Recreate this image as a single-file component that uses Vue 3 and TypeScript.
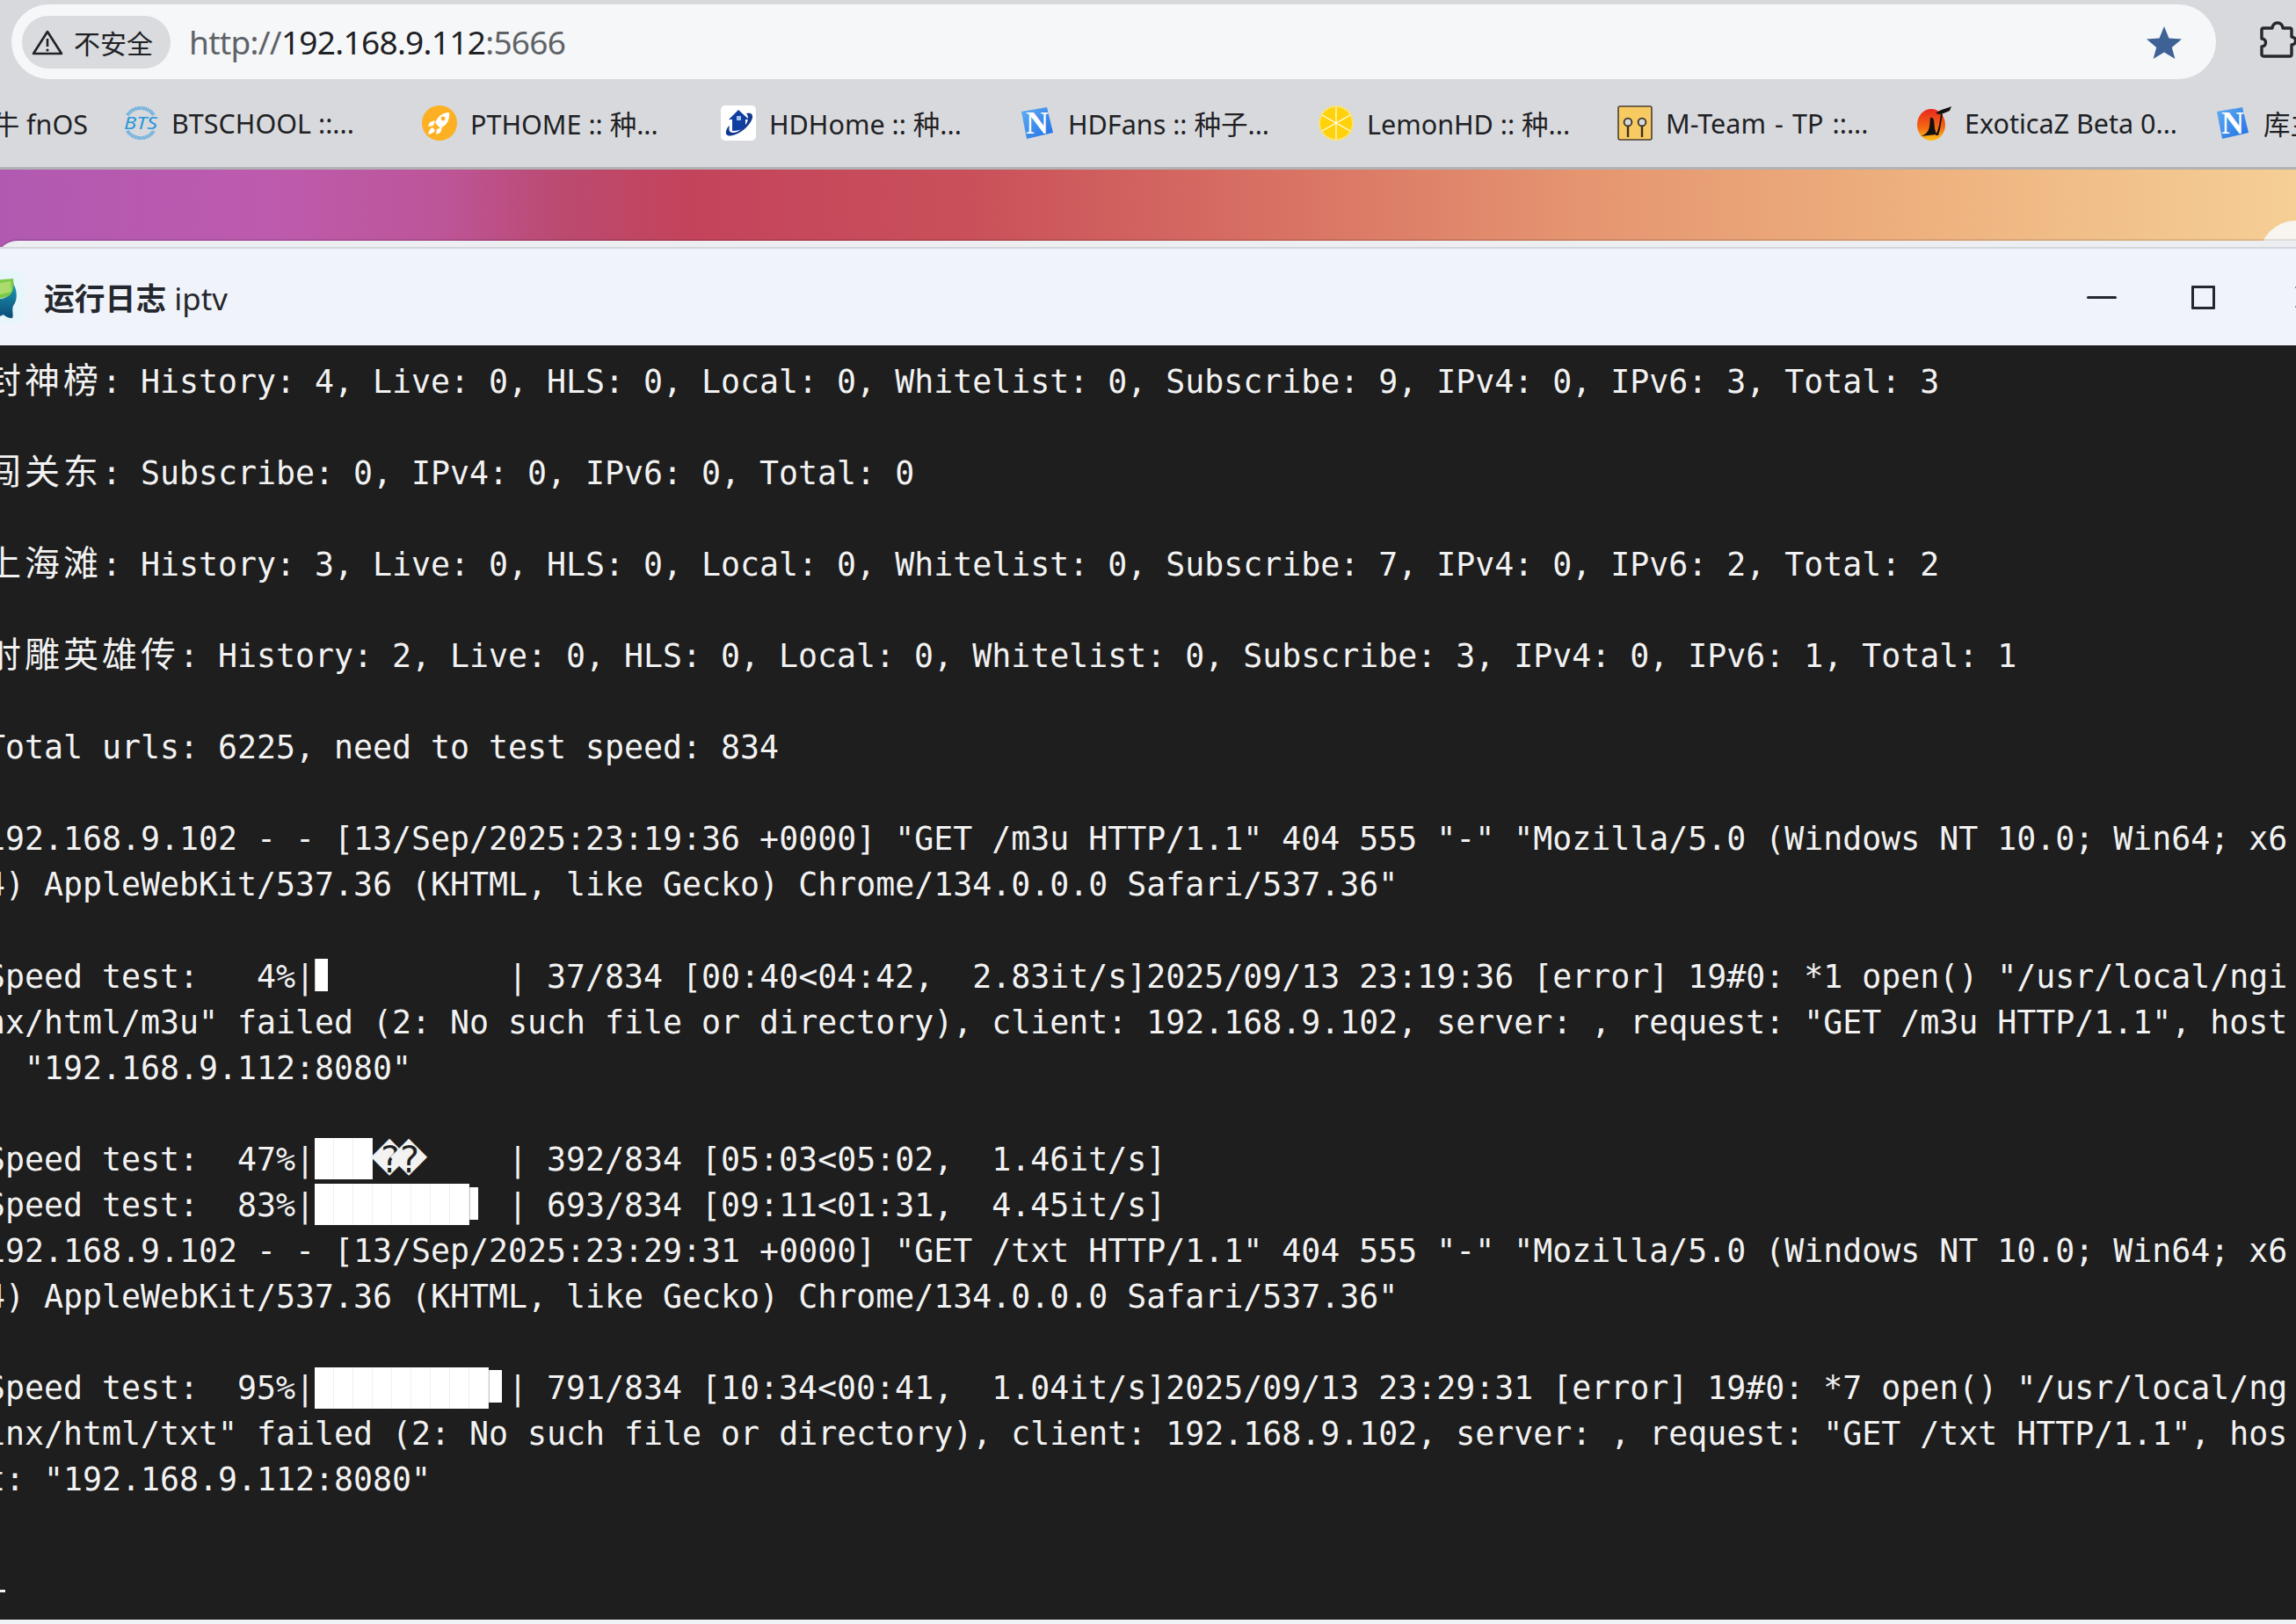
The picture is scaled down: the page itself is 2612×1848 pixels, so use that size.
<script setup lang="ts">
type Seg = { k: 't' | 'cjk' | 'full' | 'part' | 'bad'; v?: string; n?: number }
const T = (v: string): Seg => ({ k: 't', v })
const C = (v: string): Seg => ({ k: 'cjk', v })
const F = (n: number): Seg => ({ k: 'full', n })
const P = (n: number): Seg => ({ k: 'part', n })
const B: Seg = { k: 'bad', v: '\uFFFD' }

const rows: Seg[][] = [
  [C('封神榜'), T(': History: 4, Live: 0, HLS: 0, Local: 0, Whitelist: 0, Subscribe: 9, IPv4: 0, IPv6: 3, Total: 3')],
  [],
  [C('闯关东'), T(': Subscribe: 0, IPv4: 0, IPv6: 0, Total: 0')],
  [],
  [C('上海滩'), T(': History: 3, Live: 0, HLS: 0, Local: 0, Whitelist: 0, Subscribe: 7, IPv4: 0, IPv6: 2, Total: 2')],
  [],
  [C('射雕英雄传'), T(': History: 2, Live: 0, HLS: 0, Local: 0, Whitelist: 0, Subscribe: 3, IPv4: 0, IPv6: 1, Total: 1')],
  [],
  [T('Total urls: 6225, need to test speed: 834')],
  [],
  [T('192.168.9.102 - - [13/Sep/2025:23:19:36 +0000] "GET /m3u HTTP/1.1" 404 555 "-" "Mozilla/5.0 (Windows NT 10.0; Win64; x6')],
  [T('4) AppleWebKit/537.36 (KHTML, like Gecko) Chrome/134.0.0.0 Safari/537.36"')],
  [],
  [T('Speed test:   4%|'), P(15), T('         | 37/834 [00:40<04:42,  2.83it/s]2025/09/13 23:19:36 [error] 19#0: *1 open() "/usr/local/ngi')],
  [T('nx/html/m3u" failed (2: No such file or directory), client: 192.168.9.102, server: , request: "GET /m3u HTTP/1.1", host')],
  [T(': "192.168.9.112:8080"')],
  [],
  [T('Speed test:  47%|'), F(3), B, B, T('     | 392/834 [05:03<05:02,  1.46it/s]')],
  [T('Speed test:  83%|'), F(8), P(10), T(' | 693/834 [09:11<01:31,  4.45it/s]')],
  [T('192.168.9.102 - - [13/Sep/2025:23:29:31 +0000] "GET /txt HTTP/1.1" 404 555 "-" "Mozilla/5.0 (Windows NT 10.0; Win64; x6')],
  [T('4) AppleWebKit/537.36 (KHTML, like Gecko) Chrome/134.0.0.0 Safari/537.36"')],
  [],
  [T('Speed test:  95%|'), F(9), P(15), T('| 791/834 [10:34<00:41,  1.04it/s]2025/09/13 23:29:31 [error] 19#0: *7 open() "/usr/local/ng')],
  [T('inx/html/txt" failed (2: No such file or directory), client: 192.168.9.102, server: , request: "GET /txt HTTP/1.1", hos')],
  [T('t: "192.168.9.112:8080"')],
  [],
]
</script>

<template>
  <div class="page">
    <header class="chrome">
      <div class="omnibox">
        <div class="chip">
          <svg class="warn" viewBox="0 0 36 30" width="36" height="30">
            <path d="M18 3 L34 28 H2 Z" fill="none" stroke="#202124" stroke-width="2.6" stroke-linejoin="round" />
            <path d="M18 11 V20" stroke="#202124" stroke-width="2.6" />
            <circle cx="18" cy="24" r="1.6" fill="#202124" />
          </svg>
          <span class="chip-text">不安全</span>
        </div>
        <div class="url"><span class="dim">http://</span>192.168.9.112<span class="dim">:5666</span></div>
        <svg class="star" viewBox="0 0 40 37" width="40" height="37">
          <path d="M20 0 L25.5 13.6 L40 14.6 L28.8 24 L32.4 37 L20 29.6 L7.6 37 L11.2 24 L0 14.6 L14.5 13.6 Z" fill="#3f6296" />
        </svg>
        <svg class="puzzle" viewBox="0 0 44 42" width="44" height="42">
          <path d="M3 10 a2 2 0 0 1 2-2 h10 a6 6 0 0 1 12 0 h8 a2 2 0 0 1 2 2 v8 a4.5 4.5 0 0 1 0 9 v11 a2 2 0 0 1-2 2 h-30 a2 2 0 0 1-2-2 v-9 a4.5 4.5 0 0 0 0-9 z" fill="none" stroke="#26282c" stroke-width="3.4" stroke-linejoin="round" />
        </svg>
      </div>

      <nav class="bookmarks">
        <div class="mark first"><span>飞牛 fnOS</span></div>
        <div class="mark">
          <svg viewBox="0 0 40 40" width="40" height="40">
            <path d="M5 11 A18 18 0 0 1 35 11" fill="none" stroke="#5aa9de" stroke-width="4" stroke-dasharray="1.6 .7" />
            <path d="M5 29 A18 18 0 0 0 35 29" fill="none" stroke="#5aa9de" stroke-width="4" stroke-dasharray="1.6 .7" />
            <text x="1" y="27" textLength="38" lengthAdjust="spacingAndGlyphs" class="bts">BTS</text>
          </svg>
          <span>BTSCHOOL ::...</span>
        </div>
        <div class="mark">
          <svg viewBox="0 0 40 40" width="40" height="40">
            <circle cx="20" cy="20" r="20" fill="#fdb022" />
            <path d="M31 8 C24 8 18 12 15 20 L21 26 C28 23 32 16 31 8 Z" fill="#fff" />
            <path d="M15 17 L9 19 L7 24 L13 23 Z M23 25 L21 31 L16 33 L17 27 Z M12 25 C9 26 8 29 7 33 C11 32 14 31 15 28 Z" fill="#fff" />
            <circle cx="24" cy="15" r="2.4" fill="#fdb022" />
          </svg>
          <span>PTHOME :: 种...</span>
        </div>
        <div class="mark">
          <svg viewBox="0 0 40 40" width="40" height="40">
            <rect width="40" height="40" rx="5" fill="#fff" />
            <path d="M20 5 L32 16 H28 V25 C23 28 18 29 13 29 V16 H9 Z" fill="#0f3ea3" />
            <rect x="18" y="12" width="5" height="5" fill="#a9c0ea" />
            <path d="M29 9 C39 7 38 16 29 25 C20 34 4 39 6 29 C7 26 8 24 10 23 C9 27 9 31 14 31 C23 31 36 17 29 9 Z" fill="#12388f" />
          </svg>
          <span>HDHome :: 种...</span>
        </div>
        <div class="mark">
          <svg viewBox="0 0 40 40" width="40" height="40">
            <defs>
              <linearGradient id="ngrad" x1="0" y1="0" x2="1" y2="1">
                <stop offset="0" stop-color="#64aef0" />
                <stop offset="1" stop-color="#1e6fe6" />
              </linearGradient>
            </defs>
            <path d="M2 7 L31 2 L38 31 L8 38 Z" fill="url(#ngrad)" />
            <text x="20" y="32" text-anchor="middle" class="nlogo">N</text>
          </svg>
          <span>HDFans :: 种子...</span>
        </div>
        <div class="mark">
          <svg viewBox="0 0 40 40" width="40" height="40">
            <circle cx="20" cy="20" r="19" fill="#ffd20a" stroke="#f7e27a" stroke-width="2" />
            <path d="M20 2 V38 M4 11 L36 29 M36 11 L4 29" stroke="#fff" stroke-width="1.2" />
          </svg>
          <span>LemonHD :: 种...</span>
        </div>
        <div class="mark">
          <svg viewBox="0 0 40 40" width="40" height="40">
            <rect x="1" y="1" width="38" height="38" rx="2" fill="#f8cb62" stroke="#4a4030" stroke-width="1.6" />
            <path d="M12 22 V36 M28 22 V36" stroke="#3a3226" stroke-width="2.4" />
            <circle cx="12" cy="19" r="4.4" fill="#d8d8d8" stroke="#3a3226" stroke-width="1.8" />
            <circle cx="28" cy="19" r="4.4" fill="#d8d8d8" stroke="#3a3226" stroke-width="1.8" />
          </svg>
          <span class="wide">M-Team - TP ::...</span>
        </div>
        <div class="mark">
          <svg viewBox="0 0 40 40" width="40" height="40">
            <defs>
              <linearGradient id="sun" x1="0" y1="0" x2="0" y2="1">
                <stop offset="0" stop-color="#e8281e" />
                <stop offset=".6" stop-color="#f56a12" />
                <stop offset="1" stop-color="#fcc21b" />
              </linearGradient>
            </defs>
            <ellipse cx="17" cy="22" rx="16" ry="18" fill="url(#sun)" />
            <path d="M22 9 C28 4 34 4 40 1 L38 6 L31 9 L27 10 Z" fill="#111" />
            <path d="M28 9 L30 10 C28 18 28 26 25 34 L22 34 C26 26 27 18 28 9 Z" fill="#111" />
            <path d="M16 14 a3 3 0 0 1 4 3 L21 26 L23 33 L5 35 C11 33 14 30 15 24 Z" fill="#111" />
          </svg>
          <span>ExoticaZ Beta 0...</span>
        </div>
        <div class="mark">
          <svg viewBox="0 0 40 40" width="40" height="40">
            <path d="M2 7 L31 2 L38 31 L8 38 Z" fill="url(#ngrad)" />
            <text x="20" y="32" text-anchor="middle" class="nlogo">N</text>
          </svg>
          <span>库主页</span>
        </div>
      </nav>
    </header>

    <main class="desktop">
      <div class="sun"></div>
      <section class="window">
        <div class="title">
          <div class="app-icon">
            <svg viewBox="0 0 60 60" width="60" height="60">
              <defs>
                <linearGradient id="whale" x1="0" y1="0" x2="0" y2="1">
                  <stop offset="0" stop-color="#1a9ab0" />
                  <stop offset="1" stop-color="#0b4a78" />
                </linearGradient>
              </defs>
              <rect width="60" height="60" rx="12" fill="#e7f6fb" />
              <path d="M20 11 L46 9 L48 28 L20 34 Z" fill="#7cc94a" />
              <path d="M31 14 L43 12 L44 24 L31 27 Z" fill="#a9dc6d" />
              <path d="M10 30 C20 34 34 34 42 28 C45 25 47 20 46 15 C51 22 51 34 46 40 C44 46 47 51 45 54 C40 54 37 52 35 50 C28 54 16 54 10 48 Z" fill="url(#whale)" />
            </svg>
          </div>
          <h1 class="title-text"><b>运行日志</b> iptv</h1>
          <div class="controls">
            <span class="min"></span>
            <span class="max"></span>
            <svg class="close" viewBox="0 0 28 28" width="28" height="28">
              <path d="M2 2 L26 26 M26 2 L2 26" stroke="#24282e" stroke-width="3" />
            </svg>
          </div>
        </div>
        <div class="term">
          <div v-for="(row, i) in rows" :key="i" class="row">
            <template v-for="(seg, j) in row" :key="j">
              <span v-if="seg.k === 'cjk'" class="cjk">{{ seg.v }}</span>
              <span v-else-if="seg.k === 'full'" class="full" :style="{ width: (seg.n ?? 0) * 22 + 'px' }"></span>
              <span v-else-if="seg.k === 'part'" class="cell"><i :style="{ width: seg.n + 'px' }"></i></span>
              <span v-else-if="seg.k === 'bad'" class="bad"><i>{{ seg.v }}</i></span>
              <template v-else>{{ seg.v }}</template>
            </template>
          </div>
          <div class="row"><span class="cursor"></span></div>
        </div>
        <div class="foot"></div>
      </section>
    </main>
  </div>
</template>

<style scoped>
.page {
  width: 2612px;
  height: 1848px;
  overflow: hidden;
  display: flex;
  flex-direction: column;
  font-family: "Noto Sans", "Noto Sans CJK SC", sans-serif;
  color: #202124;
}
.chrome {
  height: 193px;
  flex: none;
  box-sizing: border-box;
  padding-top: 5px;
  background: #d8d9dd;
  border-bottom: 3px solid #b2b2b5;
}
.omnibox {
  display: flex;
  align-items: center;
  width: 2508px;
  height: 85px;
  margin-left: 13px;
  border-radius: 43px;
  background: #f6f7f9;
}
.chip {
  display: flex;
  align-items: center;
  flex: none;
  box-sizing: border-box;
  width: 169px;
  height: 60px;
  margin-left: 12px;
  padding-left: 11px;
  border-radius: 30px;
  background: #d9dbde;
}
.chip-text {
  margin-left: 12px;
  font-family: "Noto Sans CJK SC", sans-serif;
  font-size: 30px;
}
.url {
  margin-left: 21px;
  font-size: 37px;
  letter-spacing: -0.7px;
  white-space: pre;
}
.dim {
  color: #5f6368;
}
.star {
  flex: none;
  margin-left: auto;
  margin-top: 2px;
  margin-right: 39px;
}
.puzzle {
  flex: none;
  margin-left: 49px;
  margin-right: -93px;
  margin-top: -6px;
}
.bookmarks {
  display: flex;
  padding-top: 30px;
}
.mark {
  display: flex;
  align-items: center;
  flex: none;
  width: 340px;
  height: 40px;
  gap: 15px;
  font-size: 30.5px;
  white-space: nowrap;
  overflow: hidden;
}
.mark svg {
  flex: none;
}
.mark.first {
  width: 140px;
  box-sizing: border-box;
  justify-content: flex-end;
  padding-right: 40px;
}
.wide {
  word-spacing: 2.2px;
}
.bts {
  font-family: "Noto Sans", sans-serif;
  font-style: italic;
  font-size: 20px;
  fill: #2a97d8;
}
.nlogo {
  font-family: "Liberation Serif", serif;
  font-weight: 700;
  font-size: 36px;
  fill: #fff;
}
.desktop {
  position: relative;
  flex: 1;
  padding-top: 81px;
  background: linear-gradient(90deg, #b159b1 0, #bd5bae 300px, #bd5599 500px, #bb4a70 640px, #c4435c 780px, #c9505a 1100px, #d66c62 1400px, #e59570 1800px, #eeb27f 2200px, #f5cf96 2612px);
}
.sun {
  position: absolute;
  left: 2570px;
  top: 58px;
  width: 84px;
  height: 84px;
  border-radius: 50%;
  background: #f8f5f0;
}
.window {
  position: relative;
  display: flex;
  flex-direction: column;
  box-sizing: border-box;
  height: 1574px;
  margin-left: -6px;
  padding-top: 7px;
  border-top-left-radius: 26px;
  background: #eceef2;
  box-shadow: 0 -2px 0 rgba(0, 0, 0, 0.1);
}
.title {
  display: flex;
  align-items: center;
  flex: none;
  box-sizing: border-box;
  height: 112px;
  border-top: 2px solid #d3d6db;
  background: #f0f3f9;
}
.app-icon {
  flex: none;
  height: 60px;
  margin-left: -25px;
}
.title-text {
  margin: 0 0 0 21px;
  font-family: "Noto Sans", "Noto Sans CJK SC", sans-serif;
  font-size: 34.8px;
  font-weight: 400;
  color: #24282e;
  white-space: pre;
}
.title-text b {
  font-weight: 700;
}
.controls {
  display: flex;
  align-items: center;
  margin-left: auto;
  margin-right: -26px;
}
.min {
  width: 34px;
  height: 3px;
  border-radius: 2px;
  background: #24282e;
}
.max {
  box-sizing: border-box;
  width: 27px;
  height: 27px;
  margin-left: 85px;
  border: 3px solid #24282e;
  border-radius: 1px;
}
.close {
  margin-left: 90px;
}
.term {
  flex: 1;
  box-sizing: border-box;
  margin-left: -10px;
  padding-top: 15.5px;
  overflow: hidden;
  background: #1e1e1e;
  color: #f2f2f2;
  font-family: "DejaVu Sans Mono", monospace;
  font-size: 36.55px;
}
.row {
  height: 52.08px;
  line-height: 52.08px;
  white-space: pre;
}
.cjk {
  font-family: "Noto Sans CJK SC", sans-serif;
  font-size: 40px;
  line-height: 0;
  letter-spacing: 4px;
}
.full {
  display: inline-block;
  vertical-align: top;
  height: 47px;
  margin-top: 1.5px;
  background: repeating-linear-gradient(90deg, #ffffff 0, #ffffff 21px, #f0f0f0 21px, #f0f0f0 22px);
}
.cell {
  display: inline-block;
  vertical-align: top;
  width: 22px;
  height: 37px;
  margin-top: 5px;
}
.cell i {
  display: block;
  box-sizing: border-box;
  height: 37px;
  border-left: 1px solid #c8c8c8;
  background: #fff;
}
.bad {
  display: inline-block;
  width: 22px;
  height: 52px;
  vertical-align: top;
}
.bad i {
  display: block;
  width: 22px;
  margin-left: -2.5px;
  font-style: normal;
  font-family: "DejaVu Sans", sans-serif;
  font-size: 42px;
  line-height: 52px;
}
.cursor {
  display: inline-block;
  vertical-align: top;
  width: 22px;
  height: 3px;
  margin-top: 46px;
  background: #f2f2f2;
}
.foot {
  flex: none;
  height: 5px;
  background: #eef3f8;
}
</style>

<style>
html,
body {
  margin: 0;
  background: #1e1e1e;
}
</style>
